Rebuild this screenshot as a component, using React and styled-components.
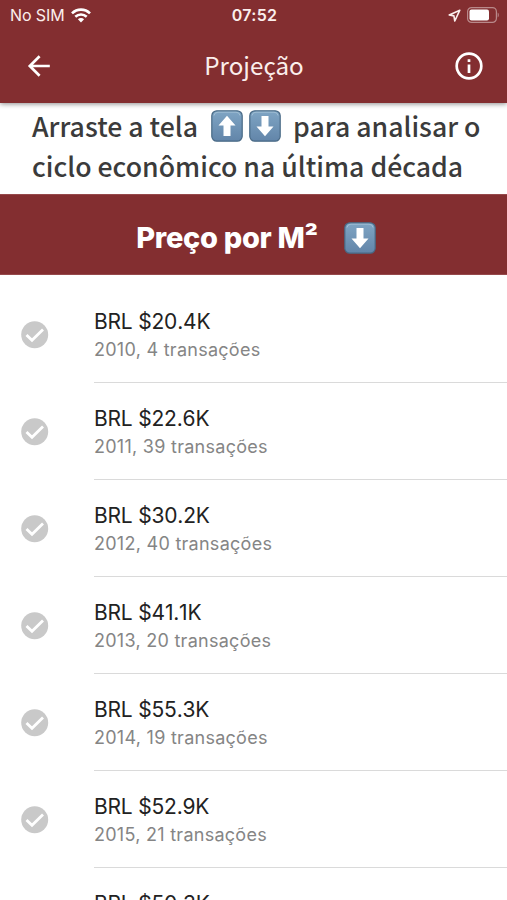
import React from 'react';
import styled, { createGlobalStyle, css } from 'styled-components';

const GlobalStyle = createGlobalStyle`
  * {
    box-sizing: border-box;
  }
  body {
    margin: 0;
    background: #fff;
    overflow: hidden;
    font-family: Inter, 'Liberation Sans', sans-serif;
  }
  svg {
    display: block;
    flex: none;
  }
`;

const sourceFont = css`
  font-family: 'Noto Sans CJK SC', 'Noto Sans', sans-serif;
`;

const Screen = styled.main`
  width: 507px;
  height: 900px;
  display: flex;
  flex-direction: column;
  overflow: hidden;
  background: #fff;
`;

const Header = styled.header`
  flex: none;
  height: 103px;
  background: #832e30;
  color: #fbeeec;
  box-shadow: 0 1px 5px rgba(0, 0, 0, 0.45);
  z-index: 1;
`;

const StatusBar = styled.div`
  height: 29px;
  padding: 0 8px 0 10px;
  display: grid;
  grid-template-columns: 1fr auto 1fr;
  align-items: center;
`;

const StatusGroup = styled.div`
  display: flex;
  align-items: center;
  justify-content: ${props => (props.$end ? 'flex-end' : 'flex-start')};
  gap: 6px;
`;

const Carrier = styled.span`
  padding-top: 1px;
  font-size: 16px;
  line-height: 29px;
  letter-spacing: -0.1px;
`;

const Clock = styled.span`
  padding-top: 1px;
  font-size: 16px;
  line-height: 29px;
  font-weight: 600;
  letter-spacing: 0.3px;
`;

const NavBar = styled.nav`
  height: 73px;
  padding: 0 23px 0 24px;
  display: grid;
  grid-template-columns: 30px 1fr 30px;
  align-items: center;
`;

const NavTitle = styled.h1`
  ${sourceFont}
  margin: 0;
  padding-bottom: 2px;
  font-size: 24.2px;
  line-height: 71px;
  font-weight: 400;
  text-align: center;
`;

const IconButton = styled.button`
  padding: 0;
  border: 0;
  background: none;
  color: #fff;
`;

const Intro = styled.p`
  ${sourceFont}
  flex: none;
  height: 91px;
  margin: 0;
  padding: 3px 0 0 32px;
  color: #3b3b3b;
  font-size: 26.65px;
  line-height: 40px;
  font-weight: 500;
`;

const IntroLine = styled.span`
  display: flex;
  align-items: center;
  white-space: pre;
`;

const KeyPair = styled.span`
  display: flex;
  gap: 6px;
  margin: 0 12.5px 0 12.5px;
`;

const Banner = styled.section`
  flex: none;
  height: 81px;
  padding: 6px 0 0 5px;
  display: flex;
  align-items: center;
  justify-content: center;
  gap: 26px;
  background: #832e30;
  border-top: 1px solid #96494b;
  border-bottom: 1px solid #96494b;
`;

const BannerTitle = styled.h2`
  margin: 0;
  color: #fff;
  font-size: 29px;
  line-height: 73px;
  font-weight: 800;
  letter-spacing: -0.3px;
`;

const List = styled.ul`
  margin: 0;
  padding: 11px 0 0;
  list-style: none;
`;

const Row = styled.li`
  height: 97px;
  padding-left: 21px;
  display: flex;
  align-items: center;
`;

const RowBody = styled.div`
  flex: 1;
  height: 97px;
  margin-left: 45px;
  padding-top: 22px;
  border-bottom: 1px solid #dadada;
`;

const Price = styled.div`
  color: #222;
  font-size: 21px;
  line-height: 28px;
  letter-spacing: -0.2px;
  font-kerning: none;
`;

const Detail = styled.div`
  color: #858585;
  font-size: 18px;
  line-height: 28px;
  letter-spacing: 0.27px;
`;

const WifiIcon = () => (
  <svg width="20" height="15" viewBox="0 0 20 15" fill="none" stroke="#fff" strokeWidth="2.6">
    <path d="M1 5.4C6 .4 14 .4 19 5.4" />
    <path d="M4.3 8.8c3.3-3 8.1-3 11.4 0" />
    <path d="M6.9 11.3c1.8-1.6 4.4-1.6 6.2 0L10 14.4z" fill="#fff" stroke="none" />
  </svg>
);

const LocationIcon = () => (
  <svg width="13" height="13" viewBox="0 0 13 13" fill="none" stroke="#fbeeec" strokeWidth="1.6" strokeLinejoin="round">
    <path d="M11.8 1.2 1.2 5.9l4.7 1 .9 5.1z" />
  </svg>
);

const BatteryIcon = () => (
  <svg width="32" height="16" viewBox="0 0 32 16">
    <rect x=".6" y=".6" width="28.8" height="14.8" rx="4" fill="none" stroke="#b9898a" strokeWidth="1.2" />
    <rect x="2.5" y="2.5" width="19.5" height="11" rx="2" fill="#fff" />
    <path d="M30.7 5.5c1.4.8 1.4 4.2 0 5z" fill="#b9898a" />
  </svg>
);

const BackIcon = () => (
  <svg width="30" height="30" viewBox="0 0 30 30" fill="none" stroke="#fff" strokeWidth="2.7">
    <path d="M25.8 15H6M15.6 5.2 5.8 15l9.8 9.8" />
  </svg>
);

const InfoIcon = () => (
  <svg width="30" height="30" viewBox="0 0 30 30" fill="none" stroke="#fff" strokeWidth="2.7">
    <circle cx="15" cy="15" r="12.3" />
    <path d="M15 13.5V22M15 8.2v2.8" />
  </svg>
);

const ArrowKey = ({ up = false }) => (
  <svg width="32" height="32" viewBox="0 0 32 32">
    <defs>
      <linearGradient id="keyFace" x1="0" y1="0" x2="0" y2="1">
        <stop offset="0" stopColor="#7fa5c4" />
        <stop offset="1" stopColor="#6285a9" />
      </linearGradient>
    </defs>
    <rect x=".8" y=".8" width="30.4" height="30.4" rx="5" fill="url(#keyFace)" stroke="#486985" strokeWidth="1.2" />
    <path d="M3 5.5Q3.5 2.2 7 2.2H25Q28.5 2.2 29 5.5" fill="none" stroke="#a4c1d5" strokeWidth=".9" />
    <path
      d="M16 26.3 7.5 16.5H12.5V6H19.5V16.5H24.5z"
      fill="#fff"
      transform={up ? 'rotate(180 16 16)' : undefined}
    />
  </svg>
);

const CheckIcon = () => (
  <svg width="28" height="28" viewBox="0 0 28 28">
    <circle cx="13.7" cy="13.8" r="13.5" fill="#c9c9c9" />
    <path d="m5.5 13.9 5.5 5.4L22 8.5" fill="none" stroke="#fff" strokeWidth="2.8" />
  </svg>
);

const prices = [
  { year: 2010, price: '20.4K', count: 4 },
  { year: 2011, price: '22.6K', count: 39 },
  { year: 2012, price: '30.2K', count: 40 },
  { year: 2013, price: '41.1K', count: 20 },
  { year: 2014, price: '55.3K', count: 19 },
  { year: 2015, price: '52.9K', count: 21 },
  { year: 2016, price: '50.3K', count: 24 }
];

const PriceRow = ({ year, price, count }) => (
  <Row>
    <CheckIcon />
    <RowBody>
      <Price>BRL ${price}</Price>
      <Detail>{year}, {count} transações</Detail>
    </RowBody>
  </Row>
);

const App = () => (
  <>
    <GlobalStyle />
    <Screen>
      <Header>
        <StatusBar>
          <StatusGroup>
            <Carrier>No SIM</Carrier>
            <WifiIcon />
          </StatusGroup>
          <Clock>07:52</Clock>
          <StatusGroup $end>
            <LocationIcon />
            <BatteryIcon />
          </StatusGroup>
        </StatusBar>
        <NavBar>
          <IconButton aria-label="Voltar"><BackIcon /></IconButton>
          <NavTitle>Projeção</NavTitle>
          <IconButton aria-label="Informações"><InfoIcon /></IconButton>
        </NavBar>
      </Header>
      <Intro>
        <IntroLine>
          Arraste a tela
          <KeyPair>
            <ArrowKey up />
            <ArrowKey />
          </KeyPair>
          para analisar o
        </IntroLine>
        <IntroLine>ciclo econômico na última década</IntroLine>
      </Intro>
      <Banner>
        <BannerTitle>Preço por M²</BannerTitle>
        <ArrowKey />
      </Banner>
      <List>
        {prices.map(item => (
          <PriceRow key={item.year} {...item} />
        ))}
      </List>
    </Screen>
  </>
);

export default App;
